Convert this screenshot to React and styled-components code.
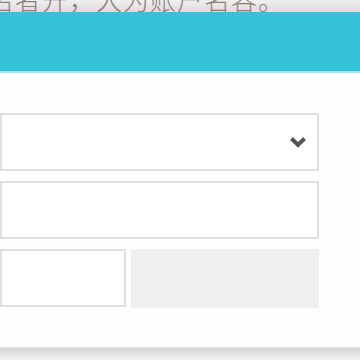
import React from "react";
import styled, { createGlobalStyle } from "styled-components";

const Global = createGlobalStyle`
  html, body {
    margin: 0;
    padding: 0;
    background: #fefefe;
  }
  * { box-sizing: border-box; }
`;

const Page = styled.div`
  width: 360px;
  height: 360px;
  overflow: hidden;
  display: flex;
  flex-direction: column;
  font-family: "Noto Sans CJK SC", "Liberation Sans", sans-serif;
`;

const Notice = styled.div`
  height: 12px;
  overflow: hidden;
  background: linear-gradient(#f0f0f0, #dcdcdc);
  span {
    display: block;
    margin-top: -16px;
    margin-left: -12px;
    font-size: 26px;
    font-weight: 300;
    line-height: 30px;
    color: #8c7f74;
    white-space: nowrap;
    letter-spacing: 1px;
  }
`;

const Header = styled.header`
  height: 61px;
  background: #35c2d9;
  border-bottom: 2px solid #a3e2ec;
`;

const Form = styled.form`
  width: 319px;
  margin-top: 40px;
  display: flex;
  flex-direction: column;
  gap: 10px;
`;

const Field = styled.div`
  height: 58px;
  border: 2px solid #e0e0e0;
  background: #fff;
  display: flex;
  align-items: center;
  justify-content: flex-end;
  padding-right: 10px;
`;

const Row = styled.div`
  display: flex;
  gap: 5px;
`;

const CodeBox = styled(Field)`
  width: 126px;
`;

const CodeButton = styled.div`
  flex: 1;
  height: 59px;
  background: #efefef;
`;

const Spacer = styled.div`
  flex: 1;
`;

const Footer = styled.footer`
  height: 13px;
  background: linear-gradient(#d2d2d2, #e6e6e6 60%, #f2f2f2);
  border-top: 1px solid #e2e2e2;
`;

function Chevron() {
  return (
    <svg width="18" height="14" viewBox="0 0 18 14">
      <path d="M2.5 3.5 L9 10 L15.5 3.5" fill="none" stroke="#555" strokeWidth="4" />
    </svg>
  );
}

export default function App() {
  return (
    <Page>
      <Global />
      <Notice>
        <span>名者开，人为账户名容。</span>
      </Notice>
      <Header />
      <Form>
        <Field>
          <Chevron />
        </Field>
        <Field />
        <Row>
          <CodeBox />
          <CodeButton />
        </Row>
      </Form>
      <Spacer />
      <Footer />
    </Page>
  );
}
